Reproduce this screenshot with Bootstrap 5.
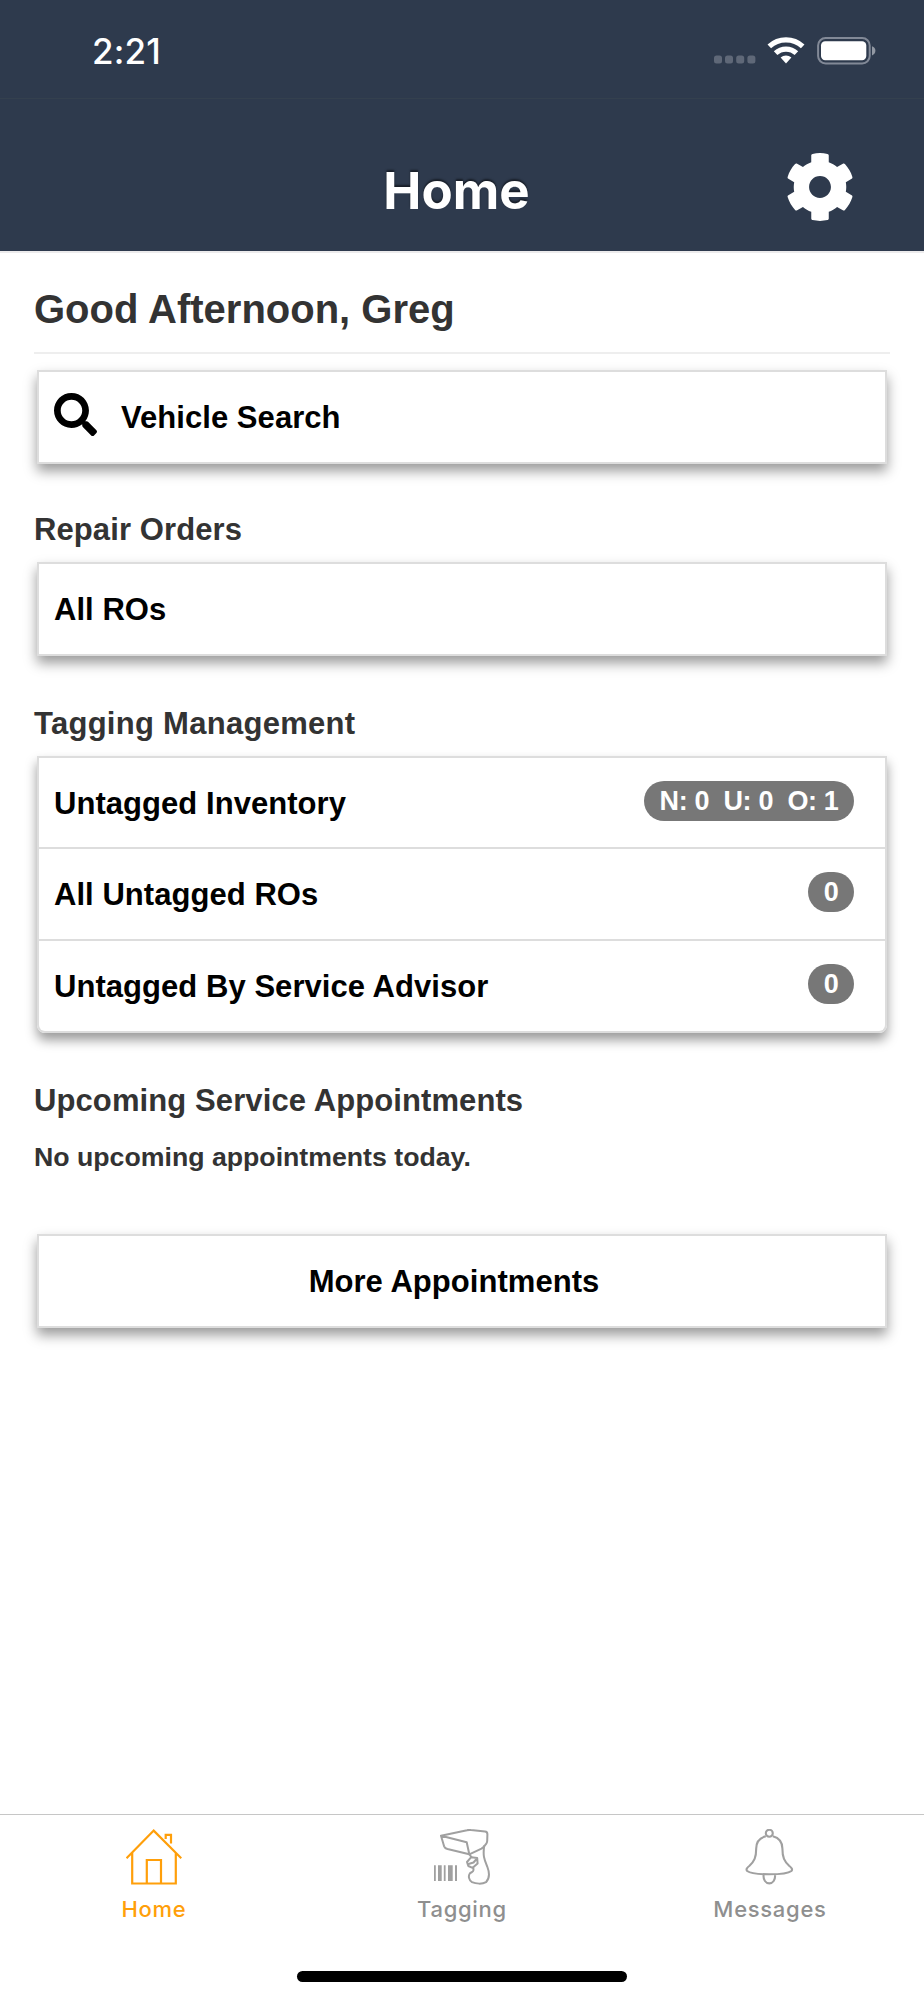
<!DOCTYPE html>
<html lang="en">
<head>
<meta charset="utf-8">
<meta name="viewport" content="width=device-width, initial-scale=1">
<title>Home</title>
<link href="https://cdn.jsdelivr.net/npm/bootstrap@5.3.0/dist/css/bootstrap.min.css" rel="stylesheet">
<style>
  body { font-family: "Liberation Sans", Arial, sans-serif; color: #333; background: #fff; }
  svg { display: block; flex: none; }
  .app-head { height: 253px; background: #2e3a4d; color: #fff; border-bottom: 2px solid #ecebec; font-family: Inter, sans-serif; }
  .status { height: 99px; border-bottom: 1px solid #34404e; padding: 3px 48px 0 92px; }
  .clock { font-size: 35px; font-weight: 500; letter-spacing: .2px; line-height: 1; padding-top: 2px; }
  .toolbar-title { font-size: 51px; font-weight: 650; line-height: 60px; padding: 62px 11px 0 0; text-shadow: 0 -2px 2px rgba(0,0,0,.5); }
  .cog { padding: 53px 69px 0 0; }
  main { padding: 0 34px; }
  .greeting { font-size: 40px; font-weight: 700; line-height: 86px; padding-top: 13px; margin: 0; border-bottom: 2px solid #eee; }
  .section-title { font-size: 31px; font-weight: 700; line-height: 66px; padding-top: 35px; margin: 0 0 -1px; letter-spacing: .1px; }
  .section-title.first { padding-top: 33px; }
  .section-title.spaced { letter-spacing: .28px; }
  .tiles { margin: 0 3px; border-radius: 0; box-shadow: 0 7px 12px rgba(0,0,0,.4); --bs-list-group-border-color: #ddd; --bs-list-group-border-width: 2px; }
  .tiles .list-group-item { height: 92px; padding: 2px 31px 0 15px; color: #000; font-size: 31px; font-weight: 700; line-height: 40px; letter-spacing: .05px; border-radius: 0; }
  .tiles .list-group-item:first-child { height: 93px; }
  .tiles .list-group-item:only-child { height: 94px; }
  .tiles.rounded-end-tiles, .tiles.rounded-end-tiles .list-group-item:last-child { border-radius: 0 0 8px 8px; }
  .count { background: #777; border-radius: 20px; font-size: 27px; line-height: 40px; padding: 0 15.5px; margin-bottom: 6px; min-width: 46px; text-align: center; white-space: pre; letter-spacing: -.35px; }
  .note { font-size: 26.7px; font-weight: 700; line-height: 49px; margin: 0 0 52px; }
  .tabs { height: 186px; border-top: 1px solid #c6c6c6; font-family: Inter, sans-serif; font-size: 22px; font-weight: 450; color: #929292; }
  .tab-item { padding-top: 14px; line-height: 28px; gap: 10px; color: #8f8f8f; letter-spacing: .7px; }
  .tab-item.current { color: #ff9f0a; }
  .home-bar { width: 330px; height: 11px; border-radius: 6px; background: #000; margin-top: 48px; }
</style>
</head>
<body>
<div class="d-flex flex-column vh-100 overflow-hidden">
  <header class="app-head">
    <div class="status d-flex align-items-center">
      <span class="clock me-auto">2:21</span>
      <svg width="163" height="28" viewBox="0 0 163 28">
        <g fill="#5f6878"><rect x="1" y="18.4" width="8" height="8" rx="2.5"/><rect x="12" y="18.4" width="8" height="8" rx="2.5"/><rect x="23.2" y="18.4" width="8" height="8" rx="2.5"/><rect x="34.4" y="18.4" width="8" height="8" rx="2.5"/></g>
        <g transform="translate(0 -.8)">
        <g fill="none" stroke="#fff" stroke-width="5.2"><path d="M56.3 10.2a24.5 24.5 0 0 1 33.4 0"/><path d="M62.6 17a15.3 15.3 0 0 1 20.800 0"/></g>
        <path fill="#fff" d="M67.6 21.3a8 8 0 0 1 10.8 0L73 27.2z"/></g>
        <rect x="105.1" y="1" width="51.6" height="25.4" rx="7.500" fill="none" stroke="#828997" stroke-width="2"/>
        <rect x="108" y="4.200" width="45.3" height="19" rx="4.2" fill="#fff"/>
        <path fill="#9298a3" d="M159 9.200q3.400 1.300 3.400 4.600t-3.400 4.600z"/>
      </svg>
    </div>
    <div class="row g-0">
      <div class="col-4 offset-4 text-center toolbar-title">Home</div>
      <div class="col-4 d-flex justify-content-end cog">
        <svg width="70" height="70" viewBox="0 0 512 512" fill="#fff"><path d="M487.4 315.7l-42.6-24.6c4.3-23.2 4.3-47 0-70.2l42.6-24.6c4.9-2.8 7.1-8.6 5.5-14-11.1-35.6-30-67.8-54.7-94.6-3.8-4.1-10-5.1-14.8-2.3L380.8 110c-17.9-15.4-38.5-27.3-60.8-35.1V25.8c0-5.6-3.9-10.5-9.4-11.7-36.7-8.2-74.3-7.8-109.2 0-5.5 1.2-9.4 6.1-9.4 11.7V75c-22.2 7.9-42.8 19.8-60.8 35.1L88.7 85.5c-4.9-2.8-11-1.9-14.8 2.3-24.7 26.7-43.6 58.9-54.7 94.6-1.7 5.4.6 11.2 5.5 14L67.3 221c-4.3 23.2-4.3 47 0 70.2l-42.6 24.6c-4.9 2.8-7.1 8.6-5.5 14 11.1 35.6 30 67.8 54.7 94.6 3.8 4.1 10 5.1 14.8 2.3l42.6-24.6c17.9 15.4 38.5 27.3 60.8 35.1v49.2c0 5.6 3.9 10.5 9.4 11.7 36.7 8.2 74.3 7.8 109.2 0 5.5-1.2 9.4-6.1 9.4-11.7v-49.2c22.2-7.9 42.8-19.8 60.8-35.1l42.6 24.6c4.9 2.8 11 1.9 14.8-2.3 24.7-26.7 43.6-58.9 54.7-94.6 1.5-5.5-.7-11.3-5.6-14.1zM256 336c-44.1 0-80-35.9-80-80s35.9-80 80-80 80 35.9 80 80-35.9 80-80 80z"/></svg>
      </div>
    </div>
  </header>

  <main>
    <h1 class="greeting">Good Afternoon, Greg</h1>
    <div class="list-group tiles mt-3">
      <a class="list-group-item d-flex align-items-center" href="#">
        <svg class="mb-2" width="43" height="43" viewBox="0 0 512 512"><path d="M505 442.7L405.3 343c-4.5-4.5-10.6-7-17-7H372c27.6-35.3 44-79.7 44-128C416 93.1 322.9 0 208 0S0 93.1 0 208s93.1 208 208 208c48.3 0 92.7-16.4 128-44v16.3c0 6.4 2.5 12.5 7 17l99.7 99.7c9.4 9.4 24.6 9.4 33.9 0l28.3-28.3c9.4-9.4 9.4-24.6.1-34zM208 336c-70.7 0-128-57.2-128-128 0-70.7 57.2-128 128-128 70.7 0 128 57.2 128 128 0 70.7-57.2 128-128 128z"/></svg>
        <span class="ms-4">Vehicle Search</span>
      </a>
    </div>

    <h2 class="section-title first">Repair Orders</h2>
    <div class="list-group tiles">
      <a class="list-group-item d-flex align-items-center" href="#">All ROs</a>
    </div>

    <h2 class="section-title spaced">Tagging Management</h2>
    <div class="list-group tiles rounded-end-tiles">
      <a class="list-group-item d-flex align-items-center justify-content-between" href="#">Untagged Inventory<span class="count text-white">N: 0  U: 0  O: 1</span></a>
      <a class="list-group-item d-flex align-items-center justify-content-between" href="#">All Untagged ROs<span class="count text-white">0</span></a>
      <a class="list-group-item d-flex align-items-center justify-content-between" href="#">Untagged By Service Advisor<span class="count text-white">0</span></a>
    </div>

    <h2 class="section-title">Upcoming Service Appointments</h2>
    <p class="note">No upcoming appointments today.</p>
    <div class="list-group tiles">
      <a class="list-group-item d-flex align-items-center justify-content-center" href="#">More Appointments</a>
    </div>
  </main>

  <nav class="tabs mt-auto">
    <div class="row g-0">
      <div class="col-4 tab-item current d-flex flex-column align-items-center">
        <svg width="56" height="56" viewBox="0 0 56 56" fill="none" stroke="currentColor" stroke-width="2.2"><path d="M.5 29.3 27.7 1.6l27.6 27.7M6.2 24v30.500h43.6V24M20.8 54.500V31H35v23.500M39.7 10V5.800H45v8.600"/></svg>
        Home
      </div>
      <div class="col-4 tab-item d-flex flex-column align-items-center">
        <svg width="58" height="56" viewBox="0 0 58 56" fill="none" stroke="#a0a0a0" stroke-width="2" stroke-linejoin="round">
          <path d="M8 6.700 34 1.200q2-.5 4-.2l14 1.600q2.500.3 2.400 2.800l-.2 6.500q0 1.500-1.200 3.200-1.500 2.600-4.500 4.500L36.300 25.300 14.500 20q-2.700-.8-3.400-2.700zM8 6.700l25.700 6.600 2.600 12"/>
          <path d="M51.200 16.500c-1.500 11 .2 14 3.200 21.500 2.300 6 1.600 12-1.400 15.200-3.500 2-10 1.800-14 0-3-1.800-4-6.200-2.200-8.700 1.500-1.700 3.500-1 3.700-3.500l-.2-2.500M36.300 25.300l2.500 3.200"/>
          <path d="m34 33 4.200-4.800 6 .8.400 5.500-5 4.300-4.300-1.800zM35.500 35l5-1.500 3.500-4"/>
          <path fill="#a0a0a0" stroke="none" d="M1 36.300h1.800V52H1zM5 36.300h3.700V52H5zM10.800 36.300h1.800V52h-1.800zM15 36.300h4.700V52H15zM22 36.300h2V52h-2z"/>
        </svg>
        Tagging
      </div>
      <div class="col-4 tab-item d-flex flex-column align-items-center">
        <svg width="56" height="56" viewBox="0 0 56 56" fill="none" stroke="#a0a0a0" stroke-width="2.100"><circle cx="27.300" cy="4.200" r="3.500"/><path d="M23.800 7.200C17 9 14.200 14 14.200 19.500c0 9-2 13-6.700 17.200-2.500 2-3.800 3.800-2.300 5.300 2.500 2 10 3.300 22.100 3.300S46.900 44 49.400 42c1.500-1.500.2-3.300-2.300-5.300-4.700-4.200-6.700-8.200-6.700-17.200 0-5.500-2.800-10.500-9.600-12.300M21.600 45.500c-.6 5.500 2.200 8.900 5.700 8.900s6.300-3.400 5.700-8.900"/></svg>
        Messages
      </div>
    </div>
    <div class="home-bar mx-auto"></div>
  </nav>
</div>
<script src="https://cdn.jsdelivr.net/npm/bootstrap@5.3.0/dist/js/bootstrap.bundle.min.js"></script>
</body>
</html>
